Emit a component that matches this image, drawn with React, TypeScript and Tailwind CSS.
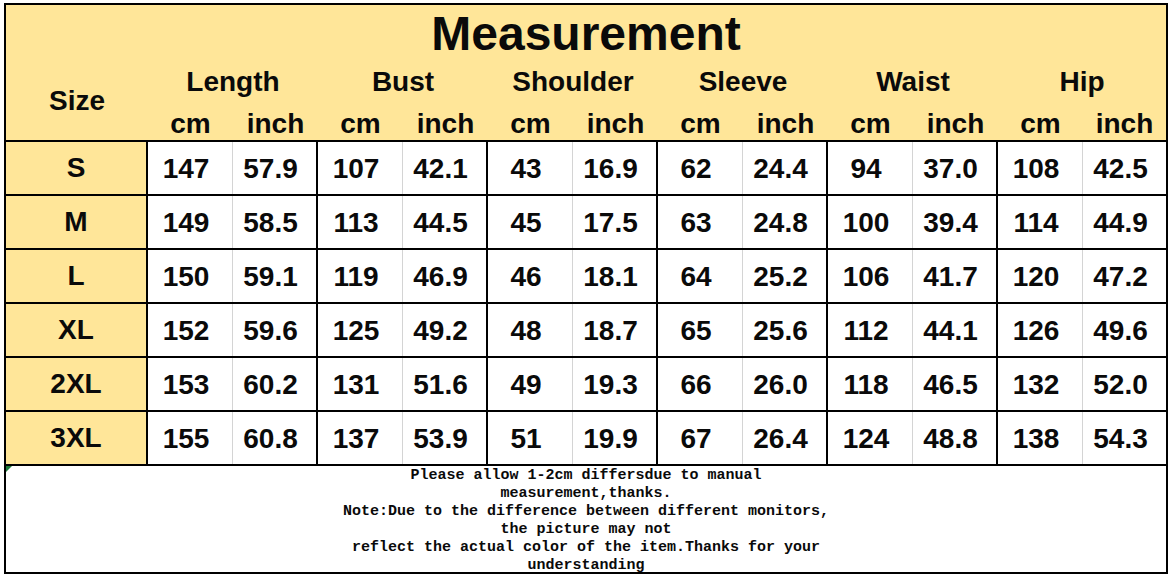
const groups = ["Length", "Bust", "Shoulder", "Sleeve", "Waist", "Hip"];

const rows: [string, string[]][] = [
  ["S", ["147", "57.9", "107", "42.1", "43", "16.9", "62", "24.4", "94", "37.0", "108", "42.5"]],
  ["M", ["149", "58.5", "113", "44.5", "45", "17.5", "63", "24.8", "100", "39.4", "114", "44.9"]],
  ["L", ["150", "59.1", "119", "46.9", "46", "18.1", "64", "25.2", "106", "41.7", "120", "47.2"]],
  ["XL", ["152", "59.6", "125", "49.2", "48", "18.7", "65", "25.6", "112", "44.1", "126", "49.6"]],
  ["2XL", ["153", "60.2", "131", "51.6", "49", "19.3", "66", "26.0", "118", "46.5", "132", "52.0"]],
  ["3XL", ["155", "60.8", "137", "53.9", "51", "19.9", "67", "26.4", "124", "48.8", "138", "54.3"]],
];

const notes = [
  "Please allow 1-2cm differsdue to manual",
  "measurement,thanks.",
  "Note:Due to the difference between different monitors,",
  "the picture may not",
  "reflect the actual color of the item.Thanks for your",
  "understanding",
];

const cellW = (i: number) => {
  if (i === 11) return "w-[83px]";
  return i % 2 === 0 ? "w-[85px] border-r border-[#d4d4d4]" : "w-[85px] border-r-2 border-black";
};

const App = () => (
  <div className="min-h-screen bg-white pt-[3px] pl-[4px] [font-family:'Liberation_Sans',Arial,sans-serif] text-[#0a0a0a]">
    <div className="w-[1164px] border-2 border-black bg-white">
      {/* header */}
      <div className="grid grid-cols-[142px_repeat(11,85px)_83px] grid-rows-[57px_40px_38px] bg-[#ffe699] font-bold">
        <div className="col-span-13 flex items-center justify-center text-[48px] leading-none">Measurement</div>
        <div className="row-span-2 flex items-center justify-center text-[28px]">Size</div>
        {groups.map((g) => (
          <div key={g} className="col-span-2 flex items-center justify-center text-[28px]">
            {g}
          </div>
        ))}
        {groups.map((g) => [
          <div key={g + "cm"} className="flex items-center justify-center pt-[5px] text-[28px]">cm</div>,
          <div key={g + "in"} className="flex items-center justify-center pt-[5px] text-[28px]">inch</div>,
        ])}
      </div>

      {/* data */}
      {rows.map(([size, vals]) => (
        <div key={size} className="flex h-[54px] border-t-2 border-black text-[28px] font-bold">
          <div className="flex w-[142px] items-center justify-center border-r-2 border-black bg-[#ffe699]">{size}</div>
          {vals.map((v, i) => (
            <div key={i} className={`flex items-center justify-center pr-2 pt-px ${cellW(i)}`}>
              {v}
            </div>
          ))}
        </div>
      ))}

      {/* footer note */}
      <div className="relative h-[108px] overflow-hidden border-t-2 border-black pt-px text-center [font-family:'Liberation_Mono','Courier_New',monospace] text-[15px] font-bold leading-[18px]">
        <svg className="absolute left-0 top-0" width="6" height="6" viewBox="0 0 6 6">
          <path d="M0 0H6L0 6Z" fill="#1e7a3a" />
        </svg>
        {notes.map((n) => (
          <div key={n}>{n}</div>
        ))}
      </div>
    </div>
  </div>
);

export default App;
